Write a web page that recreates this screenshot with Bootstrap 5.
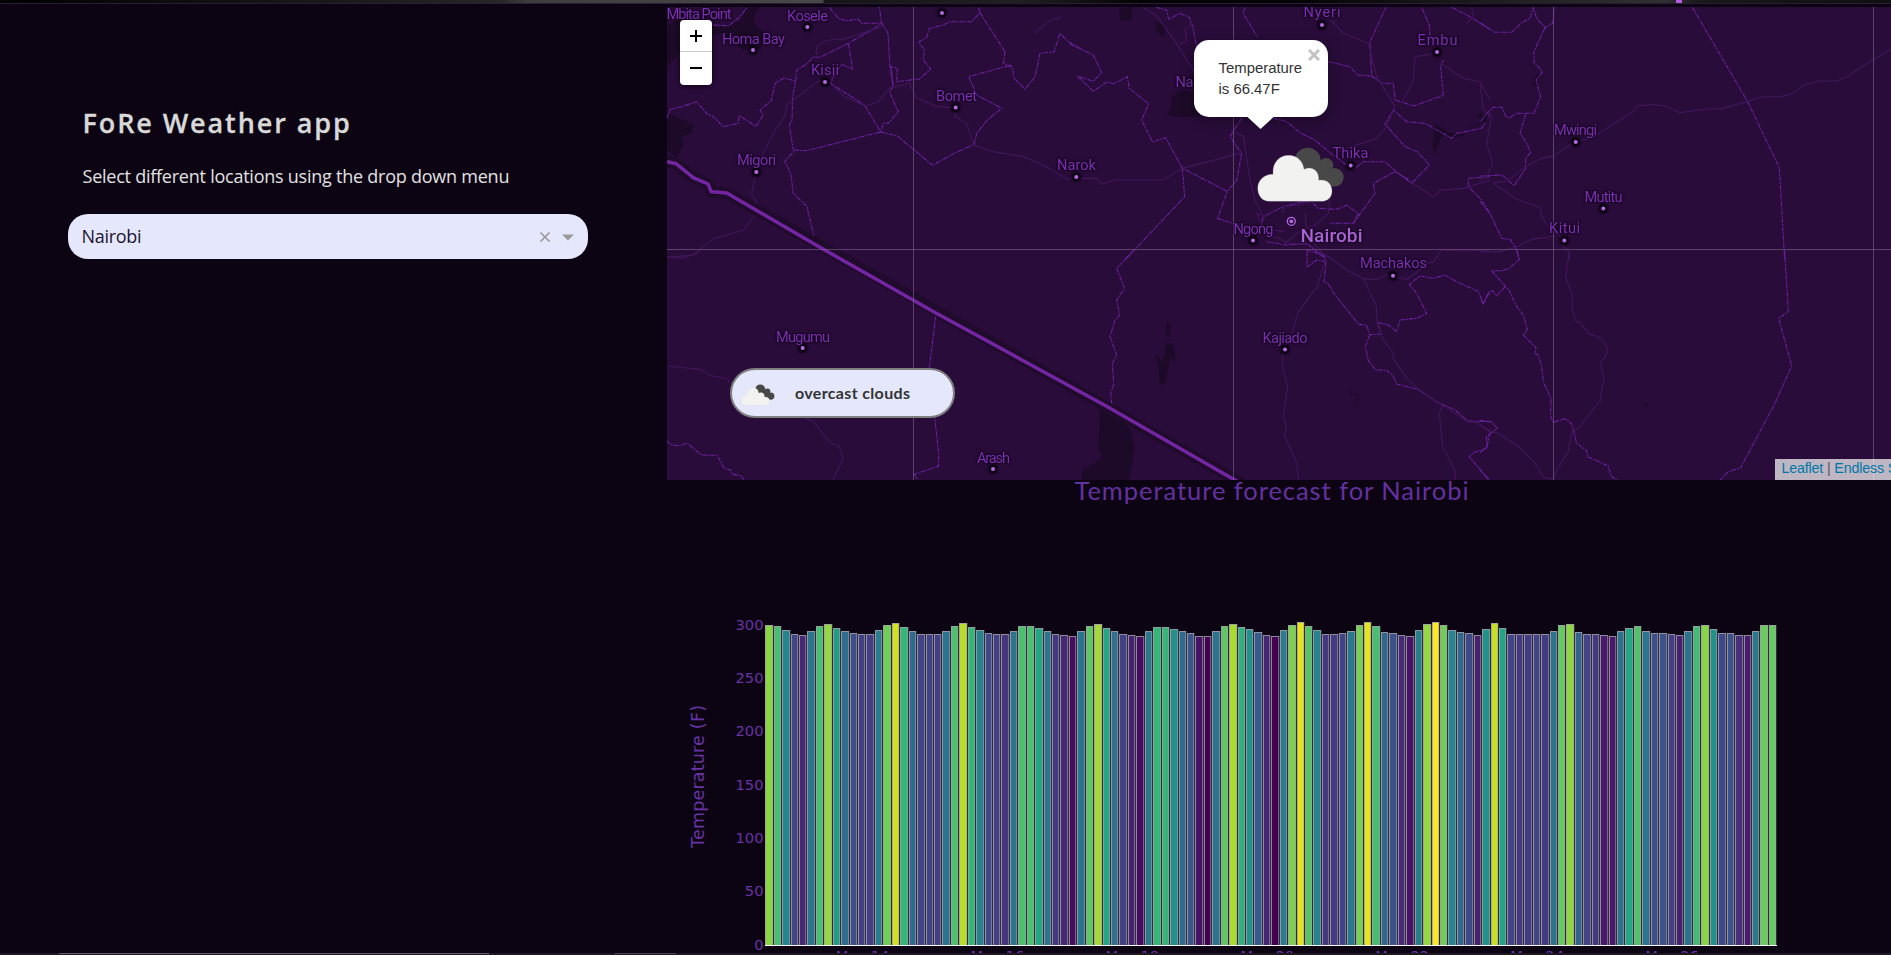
<!DOCTYPE html>
<html lang="en">
<head>
<meta charset="utf-8">
<meta name="viewport" content="width=device-width, initial-scale=1">
<title>FoRe Weather app</title>
<link href="https://cdn.jsdelivr.net/npm/bootstrap@5.3.0/dist/css/bootstrap.min.css" rel="stylesheet">
<style>
body{background:#0c0412;color:#dcdcdc;font-family:"Open Sans",sans-serif}
.strip-top{height:4px;flex:none;border-bottom:1px solid #2b1a38;background:linear-gradient(90deg,#000 0,#1a1a1a 18%,#262626 26.4%,#3e3e3e 28%,#484848 43.5%,#151515 43.6%,#202020 54%,#050505 60%,#050505 69%,#202020 80%,#303030 88%,#181818 90%,#101010 100%);position:relative}
.strip-mark{left:1676px;top:0;width:6px;height:3px;background:#b45ee6}
.strip-bottom{height:2px;flex:none;background:#1d191f}
.strip-bottom i{height:1px}
.seg-a{margin-left:59px;width:430px;background:#656066}
.seg-b{margin-left:126px;width:61px;background:#4b464d}
.side{width:667px;flex:none;padding:98px 79px 0 68px}
.side h1{font-size:27px;font-weight:600;letter-spacing:1.9px;line-height:42px;margin:0 0 19px 14.5px;color:#d9d9d9;-webkit-text-stroke:.3px #d9d9d9}
.side p{font-size:18px;line-height:27px;margin:0 0 24px 14.5px;letter-spacing:-.24px;color:#e2e2e2}
.picker{height:45px;border-radius:20px;background:#e5e8fd;color:#1c1330;font-size:18px;letter-spacing:-.3px;padding:0 12px 0 13.5px}
.map{height:473px;margin-top:3px;flex:none;background:#290c3a;overflow:hidden}
.map>svg,.chart svg{display:block}
.zoomer{left:13px;top:13px;width:32px;height:65px;border-radius:4px;background:#fff;box-shadow:0 1px 5px rgba(0,0,0,.65)}
.zoomer span{height:32px}
.zoomer span:first-child{border-bottom:1px solid #ccc}
.pop{left:526.500px;top:33px;width:134.500px;height:77px;border-radius:15px;background:#fff;color:#333;font:14.9px/21px "Liberation Sans",sans-serif;padding:18px 0 0 25px;box-shadow:0 3px 14px rgba(0,0,0,.4)}
.pop .tip{left:54px;top:77px;width:26px;height:12px;background:#fff;clip-path:polygon(0 0,100% 0,50% 100%)}
.pop .shut{right:8px;top:9px}
.legend-pill{left:63px;top:361px;width:225px;height:50px;border:2px solid #7f7f80;border-radius:25px;background:#e5e8fd;color:#333}
.legend-pill text{font:700 16px "Lato",sans-serif}
.credit{left:1108px;top:452px;width:220px;height:21px;background:rgba(255,255,255,.7);color:#555;font:14.3px/19px "Liberation Sans",sans-serif;letter-spacing:-.18px;padding-left:6.500px;white-space:nowrap}
.credit a{color:#0078a8;text-decoration:none}
.admin{fill:none;stroke:#6c229f;stroke-width:3.2;stroke-dasharray:14 3 5 3}
.road{fill:none;stroke:#41165a;stroke-width:3.4}
.lake{fill:#1d0a28}
#towns{filter:drop-shadow(0 0 1px #0d0314) drop-shadow(0 0 1px #0d0314)}
.town{font-family:"Roboto",sans-serif;font-size:14.6px;fill:#7e2eb4;text-anchor:middle}
.pin{fill:#b668e4;stroke:#0d0314;stroke-width:2}
.axis-label{font-family:"DejaVu Sans",sans-serif;font-size:14.7px;fill:#6833a6}
</style>
</head>
<body class="vh-100 overflow-hidden d-flex flex-column">
<svg width="0" height="0" class="position-absolute" aria-hidden="true">
  <symbol id="clouds" viewBox="560 440 264 168">
    <g fill="#484848"><circle cx="713" cy="482" r="39"/><circle cx="768" cy="496" r="22"/><circle cx="793" cy="532" r="28"/><path d="M690 490h80l25 60h-60z"/></g>
    <path d="M598 604C576 604 563 587 563 564C563 541 583 522 609 523C606 490 626 466 656 466C684 466 700 487 702 508C725 496 749 512 746 541C770 536 786 552 786 573C786 592 773 604 755 604Z" fill="#f2f2f1" stroke="#8a8490" stroke-opacity=".5" stroke-width="1.5"/>
  </symbol>
</svg>
<div class="strip-top"><span class="strip-mark position-absolute"></span></div>
<main class="d-flex flex-grow-1 overflow-hidden">
  <aside class="side">
    <h1>FoRe Weather app</h1>
    <p>Select different locations using the drop down menu</p>
    <div class="picker d-flex align-items-center justify-content-between">
      <span>Nairobi</span>
      <span class="d-flex align-items-center gap-2">
        <svg width="14" height="14" viewBox="0 0 14 14" stroke="#999" stroke-width="1.700"><path d="M2.500 2.500l9 9M11.500 2.500L2.500 11.500"/></svg>
        <svg width="16" height="8" viewBox="0 0 16 8" fill="#999"><path d="M2 1.500h12L8 7.500z"/></svg>
      </span>
    </div>
  </aside>
  <section class="flex-grow-1 overflow-hidden d-flex flex-column">
    <div class="map position-relative">
      <svg width="1224" height="473" viewBox="667 7 1224 473">
        <g transform="translate(660 0) scale(.33333)">
          <path class="lake" d="M21 80L60 50L130 80L175 80L240 65L262 20L300 20C270 60 280 80 320 100L300 150L250 150L180 100L100 120L40 180L21 200ZM21 340L50 350L100 375L95 400L65 410L70 435L50 475L21 450Z"/>
          <path class="admin" d="M21 355L30 328L66 320L110 305L140 341L160 350L190 380L234 370L238 347L288 379L310 345L300 330L334 302L345 250L372 234L407 243L410 210L440 193L458 172L480 172L565 130L665 72L658 20M160 75L205 78L240 50L262 22M565 130L578 207L545 193L520 230L512 250L614 316L662 396M665 70L684 100L690 200L700 260L693 200L712 205L710 245L778 237L812 208L790 180L793 150L776 126L800 112L808 85L850 75L870 65L935 65L960 38L955 20M508 22L535 55L560 62L595 58L605 70L665 70M407 243L398 290L396 360L388 375L400 450M700 260L688 275L715 335L685 370L670 370L662 396L440 452L405 450L374 485L392 520L400 580L420 600L440 618L466 725M662 396L712 408L818 496L882 460L943 433L950 400L985 357L1025 325L950 285L926 230L1055 195M1035 155L960 38M1035 155L1030 190L1057 202L1062 235L1095 268L1125 230L1140 160L1183 155L1200 100L1225 125L1260 145"/>
          <path class="road" d="M665 80L550 118C500 115 460 130 470 165M480 240L450 262L380 315L375 350L345 390L310 460L290 510L275 580L298 625L285 645L250 690L160 716L100 765L21 772M510 250L555 290L614 318L655 305L690 262L735 255L748 248L768 292L830 320L887 323L885 350L920 370L942 435L1000 455L1090 470L1160 500L1225 540L1260 530M1125 98L1165 65L1205 50"/>
          <path d="M21 485L48 491L100 533L144 552L154 575L200 579L560 781" fill="none" stroke="#210b2c" stroke-width="34"/>
        </g>
        <g transform="translate(1070 0) scale(.33333)">
          <path class="lake" d="M148 24L188 22L185 62L150 60ZM255 65L285 75L285 110L262 100ZM305 290L330 270L375 280L390 350L330 350L288 345L304 325ZM1095 370L1140 400L1160 400L1190 405L1145 416L1118 405L1092 465L1088 430ZM1260 345L1220 345L1235 365L1190 385L1240 370Z"/>
          <path class="admin" d="M258 22L290 30L296 58L330 40L358 52L368 80L382 150M0 132L70 165L95 218L70 244L22 228L70 274L112 245L130 252L172 230L178 265L236 312L215 360L247 425L287 413L337 505L472 574L442 655L550 690M337 505L344 590L165 780M525 22L520 40L562 112M775 185L840 200L862 225L905 228L900 125L948 22M905 228L935 250L970 250L975 300L1030 318L1120 286L1112 200L1120 180M1080 110L1078 75L1055 22M1145 22L1200 50L1260 88M515 355L480 410L500 440L515 460L500 540L472 574M610 355L650 365L690 398L735 420L782 460L850 510L880 485L945 485L975 512L1025 550L1078 495L1042 455L1005 440L945 372L970 330L1010 365L1065 370L1145 415L1160 400L1235 385L1260 340M730 610L745 625L800 628L830 615L865 640L850 670L780 670M850 670L915 580L910 550L975 515L1015 538M570 690L580 650L640 620L720 600M590 725L650 735L710 730L760 772M1260 530L1195 535L1195 560L1235 600L1260 640"/>
          <path class="road" d="M220 22L262 50L320 130L375 220L380 300M375 75L345 85L350 125L330 130M782 60L820 100L895 130L920 230L975 320L950 380L920 415L800 455M1120 195L1180 235L1230 245L1260 300M1100 160L1035 170L1030 240L1000 300M1205 22L1210 50L1190 70M20 535L80 535L95 553L135 540L220 540L280 540L337 505L510 460M482 390L520 410L540 540L555 600L580 650L560 640L590 700L660 730L720 735L765 770M780 590L775 640L735 675L680 700L640 735M705 640L710 700L760 765M1015 540L1090 592L1110 570L1180 565L1260 540M640 640L640 620L690 615L720 605M600 690L645 695"/>
        </g>
        <g transform="translate(1480 0) scale(.33333)">
          <path class="lake" d="M168 222L180 220L170 260L160 250ZM0 340L22 345L22 365L5 368Z"/>
          <path class="admin" d="M0 68L45 97L95 97L125 68L150 55L160 22L170 55L195 83L218 70L223 22M195 83L162 155L162 187L188 215L168 240L182 290L162 340L110 340L90 353L77 350L66 322L40 322L20 340L0 367M137 343L120 400L140 430L152 457L137 475L137 505L103 557L66 525L0 528M0 605L30 640L65 715L90 718L108 745L118 780M637 22L803 305L898 503L914 780"/>
          <path class="road" d="M0 250L10 330L35 350L20 430L38 490L18 535L0 540M40 548L80 545L135 500L185 475L222 467L245 450L290 425L340 412L400 372L460 335L470 318L520 313L555 318L600 338L680 327L725 326L800 305L845 291L905 290L940 280L970 256L1020 243L1070 243L1110 226L1120 215L1233 147M40 550L110 598L180 622L185 650L210 690L245 710L250 740L268 755L268 780M0 755L60 755L108 742L155 718L225 708"/>
        </g>
        <g transform="translate(660 250) scale(.33333)">
          <path class="admin" d="M828 195L808 355L836 610L836 648L764 673L772 690M21 572L30 583L55 588L82 580L125 615L172 616L192 655L212 660L217 673L243 677L252 690"/>
          <path class="road" d="M21 20L65 25L110 10L120 0M21 348L120 358L150 376L200 386L225 410M435 504L460 515L513 580L537 587L549 627L519 690"/>
        </g>
        <g transform="translate(1070 250) scale(.33333)">
          <path class="lake" d="M290 215L300 225L298 258L289 258ZM288 280L310 280L315 310L313 345L300 310L302 325L286 400L270 408L265 350L255 305L278 340ZM90 470L120 480L180 535L195 590L187 640L178 690L35 690L38 660L98 625L84 590L88 540Z"/>
          <path d="M838 420l8 12 20 4-8 24 8 10" fill="none" stroke="#1b0925" stroke-width="3"/>
          <path class="admin" d="M192 0L140 55L164 115L140 150L149 195L135 210L120 260L140 315L127 340L131 405L122 430L125 462L105 462M708 0L760 15L768 35L740 30L710 52L712 0M768 35L762 95L775 102L790 128L865 222L890 227L900 254L932 252L924 217L955 225L980 245L990 210L1040 205L1070 190L1040 130L1018 103L1050 78L1090 85L1125 75L1160 95L1210 118L1225 125L1240 160L1260 125M900 254L886 290L895 332L917 360L950 361L968 375L980 402L1045 418L1098 455L1155 480L1195 513L1260 515M1260 548L1250 595L1210 608L1198 620L1255 688"/>
          <path class="road" d="M750 0L768 20L742 110L684 187L668 245L640 300L637 350L653 410L640 500L650 530L643 555L680 640L686 690M768 15L830 60L880 86L918 165L922 220L940 270L968 305L972 330L1010 385L1060 430L1195 516L1220 518L1260 545M880 86L920 88L950 75L1010 88L1050 60L1070 40L1090 35L1115 0L1180 3L1260 0M1118 466L1108 490L1118 590L1156 665L1156 690"/>
        </g>
        <g transform="translate(1480 250) scale(.33333)">
          <path class="lake" d="M490 460L508 463L498 471Z"/>
          <path class="admin" d="M110 0L118 28L88 55L65 62L35 62L88 122L110 170L130 195L142 240L130 255L168 293L165 310L175 315L185 350L190 395L213 445L212 500L220 517L255 506L275 521L290 580L320 602L323 620L385 648L393 678L410 690M75 110L50 138L38 122L25 128L10 162L0 148M914 0L925 185L896 205L935 347L885 460L782 653L745 665L720 690M0 511L35 515L52 535L20 560L20 592L0 608M0 660L28 690"/>
          <path class="road" d="M0 3L50 6L70 0M258 0L268 5L257 80L277 137L277 180L288 215L300 217L325 250L360 263L382 292L380 310L360 342L372 385L363 430L362 453L350 463L298 533L275 545L265 605L233 655L220 687L190 682L163 636L110 585L50 548L35 545L0 525"/>
        </g>
        <path d="M846.7 260L1243 484" fill="none" stroke="#210b2c" stroke-width="11"/>
        <path d="M667 161.700L676 163.700L693.300 177.700L708 184L711.300 191.700L726.700 193L822 248.500L935 312.500L1107 406.500L1240 483" fill="none" stroke="#7425a4" stroke-width="3.500"/>
        <path d="M913.500 7V480M1233.500 7V480M1553.500 7V480M1873.500 7V480M667 249.500H1891" stroke="#80628d" stroke-opacity=".62" stroke-width="1"/>
        <g id="towns"></g>
        <circle cx="1291.300" cy="221.300" r="4" fill="#290c3a" stroke="#b668e4" stroke-width="1.300"/><circle cx="1291.300" cy="221.300" r="1.900" fill="#b668e4"/>
        <use href="#clouds" x="1256.700" y="146.700" width="88" height="56"/>
      </svg>
      <div class="zoomer position-absolute d-flex flex-column">
        <span class="d-flex align-items-center justify-content-center"><svg width="14" height="14" viewBox="0 0 14 14" stroke="#000" stroke-width="2"><path d="M1 7h12M7 1v12"/></svg></span>
        <span class="d-flex align-items-center justify-content-center"><svg width="14" height="14" viewBox="0 0 14 14" stroke="#000" stroke-width="2"><path d="M1 7h12"/></svg></span>
      </div>
      <div class="pop position-absolute">Temperature<br>is 66.47F
        <svg class="shut position-absolute" width="12" height="12" viewBox="0 0 12 12" stroke="#c3c3c3" stroke-width="3"><path d="M1 1l10 10M11 1L1 11"/></svg>
        <span class="tip position-absolute"></span>
      </div>
      <div class="legend-pill position-absolute d-flex align-items-center">
        <svg width="35" height="22" class="ms-2 mt-1"><use href="#clouds" width="35" height="22"/></svg>
        <svg width="130" height="24" class="ms-3"><text x="4" y="18" textLength="115" fill="#333">overcast clouds</text></svg>
      </div>
      <div class="credit position-absolute"><a href="#">Leaflet</a> | <a href="#">Endless Sky</a></div>
    </div>
    <div class="chart flex-grow-1 overflow-hidden">
      <svg width="1224" height="473" viewBox="667 480 1224 473">
        <text x="1074.500" y="500" textLength="394" font-family="Lato" font-size="25.500" fill="#6430a1">Temperature forecast for Nairobi</text>
        <text class="axis-label" transform="translate(704 848) rotate(-90)" textLength="143" style="font-size:17.500px">Temperature (F)</text>
        <g id="bars"></g>
        <path d="M765 945.500H1777" stroke="#fff"/>
        <g id="axes"></g>
      </svg>
    </div>
  </section>
</main>
<div class="strip-bottom d-flex"><i class="seg-a"></i><i class="seg-b"></i></div>
<script src="https://cdn.jsdelivr.net/npm/bootstrap@5.3.0/dist/js/bootstrap.bundle.min.js"></script>
<script>
const NS = 'http://www.w3.org/2000/svg';
function add(parent, tag, attrs, text) {
  const el = document.createElementNS(NS, tag);
  for (const k in attrs) el.setAttribute(k, attrs[k]);
  if (text) el.textContent = text;
  document.getElementById(parent).appendChild(el);
}
// name, label centre x, baseline, label width, pin x, pin y
const towns = [
  ['Mbita Point',699,18.5,65,0,0],['Kosele',807.5,20.5,41,807.3,27],['Homa Bay',753.5,43.5,63,753,50],
  ['Kisii',825,74.5,28,825,82],['Migori',756.5,165,39,756.3,172],['Bomet',956.5,100.5,41,955.7,107.5],
  ['',0,0,0,942,13],['Narok',1076.5,170,39,1076.3,177],['Naivasha',1204,86.5,57,0,0],
  ['Nyeri',1322,17,37,1322,25],['Embu',1437.5,44.5,40,1437,52],['Thika',1350.5,158,36,1350.7,165.5],
  ['Ngong',1253.5,234,40,1253,240.5],['Machakos',1393.5,268,67,1393,275.7],['Kajiado',1285,343,45,1285,349.5],
  ['Mwingi',1575.5,135,43,1575.7,142],['Mutitu',1603.5,202,38,1603.3,208.5],['Kitui',1564.5,232.5,31,1564.3,240.5],
  ['Mugumu',803,342,54,802.7,348],['Arash',993.5,462.5,33,993,469]
];
for (const [name, x, y, w, px, py] of towns) {
  if (px) add('towns', 'circle', {class: 'pin', cx: px, cy: py, r: 3});
  if (name) add('towns', 'text', {class: 'town', x, y, textLength: w}, name);
}
add('towns', 'text', {class: 'town', x: 1331.5, y: 241.5, textLength: 62, style: 'font-size:19px;fill:#a862d6;font-weight:500'}, 'Nairobi');

// three-hourly readings, each as a fraction of the colour range
const levels = [.82,.7,.45,.2,.11,.38,.7,.84,.55,.35,.24,.19,.18,.42,.78,.93,.66,.34,.2,.19,.18,.39,.71,.89,.66,.44,.22,.19,.15,.38,.71,.71,.6,.38,.16,.11,.03,.38,.75,.86,.59,.37,.19,.09,.03,.4,.66,.66,.5,.34,.26,.05,0,.38,.75,.87,.64,.5,.28,.1,0,.42,.8,.96,.73,.44,.16,.17,.21,.4,.79,.96,.7,.33,.25,.12,.05,.43,.84,1,.78,.45,.33,.22,.09,.5,.91,.58,.2,.16,.17,.2,.17,.38,.76,.83,.32,.2,.16,.07,.06,.38,.6,.72,.38,.24,.25,.18,.09,.38,.69,.82,.5,.22,.25,.13,.07,.4,.77,.76];
const scale = ['440154','48186a','472d7b','424086','3b528b','33638d','2c728e','26828e','21918c','1fa088','28ae80','3fbc73','5ec962','84d44b','addc30','d8e219','fde725']
  .map(h => [0, 2, 4].map(i => parseInt(h.substr(i, 2), 16)));
function viridis(t) {
  const p = t * 16, i = Math.min(15, Math.floor(p)), f = p - i;
  return 'rgb(' + scale[i].map((c, k) => Math.round(c + (scale[i + 1][k] - c) * f)) + ')';
}
levels.forEach((t, i) => {
  const x = Math.round(765.3 + i * 8.433), r = Math.round(765.3 + (i + 1) * 8.433), top = Math.round(637.4 - t * 14.5) - 1;
  add('bars', 'rect', {x: x + .5, y: top + .5, width: r - x - 1.7, height: 945 - top, fill: viridis(t), stroke: '#c4c4cc', 'stroke-opacity': .68});
});
for (let v = 0; v <= 300; v += 50) add('axes', 'text', {class: 'axis-label', x: 763.5, y: 949.6 - v * 1.0667, 'text-anchor': 'end'}, String(v));
for (let d = 0; d < 7; d++) add('axes', 'text', {class: 'axis-label', x: 862.5 + d * 134.93, y: 961, 'text-anchor': 'middle'}, 'May ' + (14 + 2 * d));
</script>
</body>
</html>
